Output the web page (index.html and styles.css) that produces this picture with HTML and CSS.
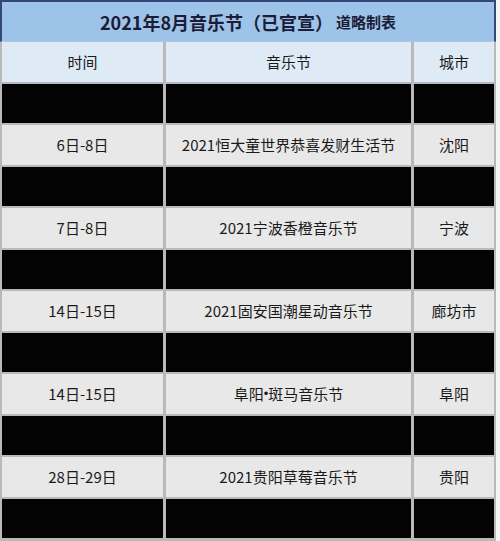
FILE: index.html
```html
<!DOCTYPE html>
<html lang="zh-CN">
<head>
<meta charset="utf-8">
<title>2021年8月音乐节</title>
<link rel="stylesheet" href="styles.css">
</head>
<body>
<div class="sheet">
  <div class="title">
    <span class="main">2021年8月音乐节（已官宣）</span>
    <span class="sign">道略制表</span>
  </div>
  <div class="grid">
    <div class="cell head">时间</div>
    <div class="cell head">音乐节</div>
    <div class="cell head">城市</div>

    <div class="cell dark"></div><div class="cell dark"></div><div class="cell dark"></div>
    <div class="cell">6日-8日</div><div class="cell">2021恒大童世界恭喜发财生活节</div><div class="cell">沈阳</div>
    <div class="cell dark"></div><div class="cell dark"></div><div class="cell dark"></div>
    <div class="cell">7日-8日</div><div class="cell">2021宁波香橙音乐节</div><div class="cell">宁波</div>
    <div class="cell dark"></div><div class="cell dark"></div><div class="cell dark"></div>
    <div class="cell">14日-15日</div><div class="cell">2021固安国潮星动音乐节</div><div class="cell">廊坊市</div>
    <div class="cell dark"></div><div class="cell dark"></div><div class="cell dark"></div>
    <div class="cell">14日-15日</div><div class="cell">阜阳<span class="dot">•</span>斑马音乐节</div><div class="cell">阜阳</div>
    <div class="cell dark"></div><div class="cell dark"></div><div class="cell dark"></div>
    <div class="cell">28日-29日</div><div class="cell">2021贵阳草莓音乐节</div><div class="cell">贵阳</div>
    <div class="cell dark"></div><div class="cell dark"></div><div class="cell dark"></div>
  </div>
</div>
</body>
</html>
```
FILE: styles.css
```css
html, body {
  margin: 0;
  padding: 0;
  background: #f4f4f4;
}
body {
  font-family: "Noto Sans CJK SC", "Noto Sans", sans-serif;
  color: #1a1a1a;
}
.sheet {
  width: 496px;
  height: 541px;
  overflow: hidden;
  background: #b9b9b9;
}
.title {
  box-sizing: border-box;
  height: 42px;
  border-top: 2px solid #34477a;
  border-left: 2px solid #34477a;
  border-right: 2px solid #34477a;
  border-bottom: 1px solid #b7c4d2;
  background: #9dc3e8;
  display: flex;
  align-items: center;
  justify-content: center;
  gap: 3px;
  color: #1b1d38;
  font-weight: bold;
}
.main {
  font-size: 18px;
}
.sign {
  font-size: 15px;
}
.grid {
  display: grid;
  grid-template-columns: 161px 245px 80px;
  grid-auto-rows: 39.5px;
  column-gap: 3px;
  row-gap: 2px;
  padding: 0 2px 3px 2px;
}
.cell {
  display: flex;
  align-items: center;
  justify-content: center;
  background: #e8e8e8;
  font-size: 15px;
}
.cell.head {
  background: #deebf7;
}
.cell.dark {
  background: #030303;
}
.dot {
  font-family: "Liberation Sans", sans-serif;
  font-size: 13px;
}
```
